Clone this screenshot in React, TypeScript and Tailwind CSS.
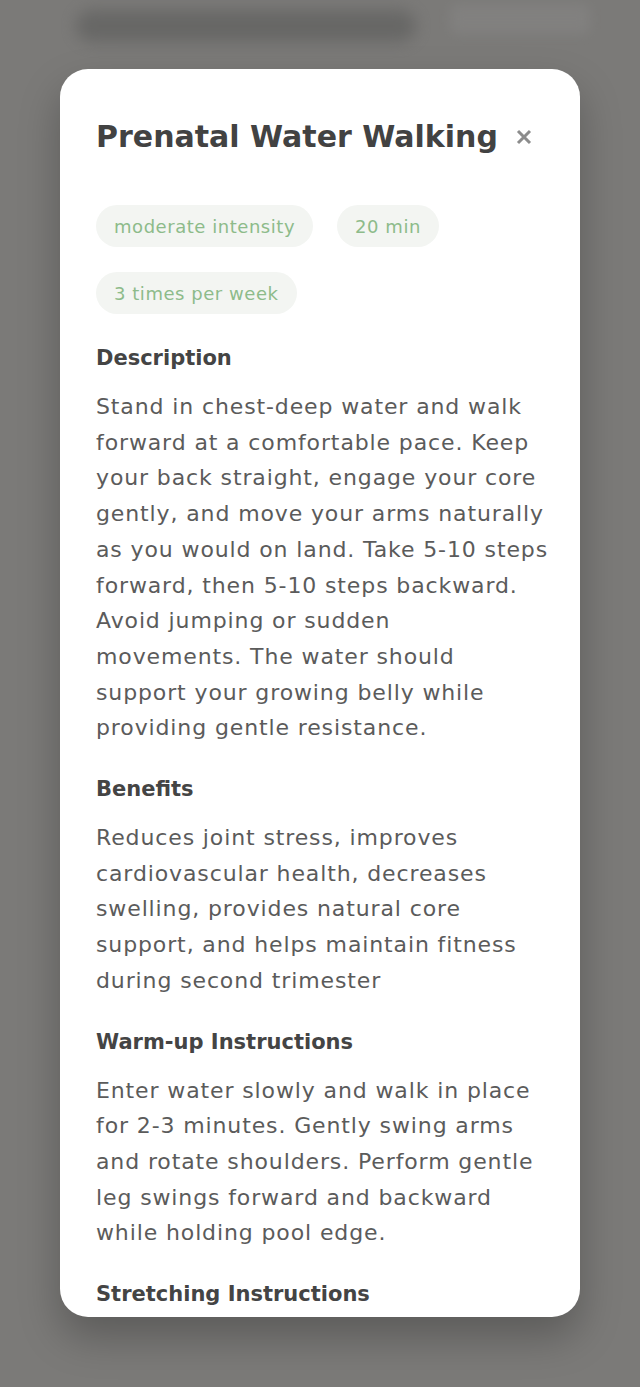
const sections = [
  {
    title: "Description",
    lines: [
      "Stand in chest-deep water and walk",
      "forward at a comfortable pace. Keep",
      "your back straight, engage your core",
      "gently, and move your arms naturally",
      "as you would on land. Take 5-10 steps",
      "forward, then 5-10 steps backward.",
      "Avoid jumping or sudden",
      "movements. The water should",
      "support your growing belly while",
      "providing gentle resistance.",
    ],
  },
  {
    title: "Benefits",
    lines: [
      "Reduces joint stress, improves",
      "cardiovascular health, decreases",
      "swelling, provides natural core",
      "support, and helps maintain fitness",
      "during second trimester",
    ],
  },
  {
    title: "Warm-up Instructions",
    lines: [
      "Enter water slowly and walk in place",
      "for 2-3 minutes. Gently swing arms",
      "and rotate shoulders. Perform gentle",
      "leg swings forward and backward",
      "while holding pool edge.",
    ],
  },
  { title: "Stretching Instructions", lines: [] },
];

const tags = ["moderate intensity", "20 min", "3 times per week"];

export default function App() {
  return (
    <div className="relative h-[1387px] w-full overflow-hidden bg-[#7b7a78] font-['DejaVu_Sans',sans-serif]">
      {/* blurred page behind the overlay */}
      <div className="pointer-events-none absolute inset-0">
        <div className="absolute left-[76px] top-[10px] h-[32px] w-[340px] rounded-full bg-[#5f5f5e] opacity-70 blur-[8px]" />
        <div className="absolute left-[450px] top-[4px] h-[30px] w-[140px] rounded-md bg-[#868584] opacity-60 blur-[6px]" />
      </div>

      {/* Modal */}
      <div className="absolute left-[60px] top-[69px] h-[1248px] w-[520px] overflow-hidden rounded-[28px] bg-white px-9 pt-12 shadow-[0_20px_40px_rgba(0,0,0,0.25)]">
        <div className="flex items-center gap-[18px]">
          <h1 className="text-[30px] font-bold leading-[40px] text-[#424242]">Prenatal Water Walking</h1>
          <button className="text-[#8c8c8c]" aria-label="Close">
            <svg width="16" height="16" viewBox="0 0 16 16" fill="none">
              <path d="M2 2L14 14M14 2L2 14" stroke="currentColor" strokeWidth="3" />
            </svg>
          </button>
        </div>

        <div className="mt-12 flex flex-wrap gap-x-6 gap-y-[25px]">
          {tags.map((t) => (
            <span
              key={t}
              className="flex h-[42px] items-center rounded-full bg-[#f3f5f2] px-[18px] text-[18px] tracking-[0.03em] text-[#8dbb8a]"
            >
              {t}
            </span>
          ))}
        </div>

        <div className="mt-[28px] flex flex-col gap-[27px]">
          {sections.map((s) => (
            <section key={s.title}>
              <h2 className="text-[21px] font-bold leading-[33px] text-[#444444]">{s.title}</h2>
              {s.lines.length > 0 && (
                <p className="mt-[14px] whitespace-nowrap text-[22px] leading-[35.7px] tracking-[0.04em] text-[#5b5b5b]">
                  {s.lines.map((l) => (
                    <span key={l} className="block">
                      {l}
                    </span>
                  ))}
                </p>
              )}
            </section>
          ))}
        </div>
      </div>
    </div>
  );
}
